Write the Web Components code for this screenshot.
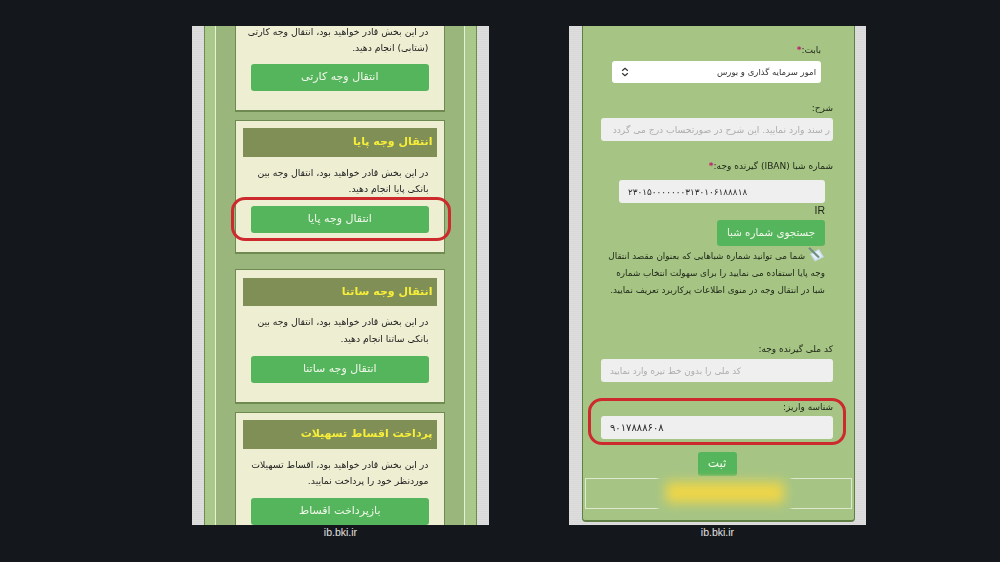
<!DOCTYPE html>
<html lang="fa">
<head>
<meta charset="utf-8">
<title>ib.bki.ir</title>
<style>
  html, body { margin: 0; height: 100%; }
  body { background: #14171b; overflow: hidden; font-family: "DejaVu Sans", "Liberation Sans", sans-serif; }
  main { display: flex; gap: 80px; padding: 26px 0 0 192px; }
</style>
</head>
<body>
<main>
  <bki-device>
    <bki-rails>
      <bki-card cut action="انتقال وجه کارتی">
        در این بخش قادر خواهید بود، انتقال وجه کارتی<br>(شتابی) انجام دهید.
      </bki-card>
      <bki-card heading="انتقال وجه پایا" action="انتقال وجه پایا" ringed>
        در این بخش قادر خواهید بود، انتقال وجه بین<br>بانکی پایا انجام دهید.
      </bki-card>
      <bki-card heading="انتقال وجه ساتنا" action="انتقال وجه ساتنا" style="margin-top:7px">
        در این بخش قادر خواهید بود، انتقال وجه بین<br>بانکی ساتنا انجام دهید.
      </bki-card>
      <bki-card heading="پرداخت اقساط تسهیلات" action="بازپرداخت اقساط">
        در این بخش قادر خواهید بود، اقساط تسهیلات<br>موردنظر خود را پرداخت نمایید.
      </bki-card>
    </bki-rails>
  </bki-device>

  <bki-device>
    <bki-form-panel>
      <bki-field label="بابت:" required kind="select" value="امور سرمایه گذاری و بورس" style="--w:209px;--mr:12px;--gap:4px;--lmr:12px"></bki-field>
      <bki-field label="شرح:" placeholder="ر سند وارد نمایید. این شرح در صورتحساب درج می گردد" style="margin-top:18px;--pr:3px;--fs:9.2px"></bki-field>
      <bki-field label="شماره شبا (IBAN) گیرنده وجه:" required value="۲۳۰۱۵۰۰۰۰۰۰۰۳۱۳۰۱۰۶۱۸۸۸۱۸" align="left" style="margin-top:18px;--w:206px;--mr:8px;--gap:7px;--fs:8.9px"></bki-field>
      <bki-iban-help></bki-iban-help>
      <bki-field label="کد ملی گیرنده وجه:" placeholder="کد ملی را بدون خط تیره وارد نمایید" align="left" style="margin-top:43px;--fs:8.8px"></bki-field>
      <bki-field label="شناسه واریز:" value="۹۰۱۷۸۸۸۶۰۸" align="left" ringed style="margin-top:18px;--gap:2px;--fs:10px"></bki-field>
      <bki-submit></bki-submit>
    </bki-form-panel>
  </bki-device>
</main>

<script>
  (function () {
    "use strict";

    var BTN = "#55b55c";

    function make(name, css, html) {
      customElements.define(name, class extends HTMLElement {
        constructor() {
          super();
          this.attachShadow({ mode: "open" });
        }
        connectedCallback() {
          var a = this;
          this.shadowRoot.innerHTML = "<style>" + css + "</style>" + (typeof html === "function" ? html(function (k) { return a.getAttribute(k) || ""; }, a) : html);
        }
      });
    }

    // one phone capture with the address under it
    make("bki-device",
      ":host{display:block;width:297px}" +
      ".screen{height:499px;overflow:hidden;background:repeating-linear-gradient(0deg,#dedede 0 1px,#d8d8d8 1px 2px);filter:blur(.2px)}" +
      ".url{height:14px;text-align:center;color:#e2e2e2;font:10.5px/14px 'Liberation Sans',Arial,sans-serif}",
      '<div class="screen"><slot></slot></div><div class="url">ib.bki.ir</div>');

    // striped green columns of the left capture
    make("bki-rails",
      ":host{display:block;height:100%;padding:0 12px;box-sizing:border-box}" +
      ".outer{height:100%;padding:0 11px 0 9.5px;background:#a9c88a;border:solid #6f8a50;border-width:0 1px}" +
      ".inner{height:100%;padding:0 19px;background:#9bb67c;border:solid #e6efd8;border-width:0 1px;display:flex;flex-direction:column;gap:8px}",
      '<div class="outer"><div class="inner"><slot></slot></div></div>');

    make("bki-card",
      ":host{display:block;flex:none;background:#eeeed3;border:1px solid #6f8a50;border-bottom-width:2px;padding:7.5px 7.5px 19px;color:#1c1c1c}" +
      ":host([cut]){border-top:0;padding-top:0;margin-top:-2.5px}" +
      "h3{margin:0;height:28.5px;background:#7f8f56;color:#f6ee3a;font:bold 11px/28.5px 'DejaVu Sans',sans-serif;padding:0 4px;text-align:right;direction:rtl;white-space:nowrap}" +
      ".desc{margin:8px 8px 8.5px;direction:rtl;text-align:right;font-size:9.3px;line-height:16.5px;white-space:nowrap}" +
      ":host([cut]) .desc{margin-top:0;margin-bottom:7px}" +
      ".act{position:relative;margin:0 8px;height:27px;border-radius:3px;background:" + BTN + ";color:#f1f7ea;font-size:11px;line-height:26px;text-align:center;direction:rtl}" +
      ".ring{position:absolute;inset:-9px -22px -8px -20px;border:3.5px solid #cd2a2e;border-radius:14px}",
      function (a, el) {
        return (a("heading") ? "<h3>" + a("heading") + "</h3>" : "") +
          '<div class="desc"><slot></slot></div><div class="act">' + a("action") +
          (el.hasAttribute("ringed") ? '<div class="ring"></div>' : "") + "</div>";
      });

    // flat green form of the right capture
    make("bki-form-panel",
      ":host{display:block;height:100%;padding:0 11px 3px 13px;box-sizing:border-box}" +
      ".panel{height:100%;box-sizing:border-box;background:#a6c585;border:solid #5f7f45;border-width:0 1px 2px;border-radius:0 0 4px 4px;padding:17px 21px 0 18px;display:flex;flex-direction:column}",
      '<div class="panel"><slot></slot></div>');

    make("bki-field",
      ":host{display:block;position:relative;flex:none}" +
      ".lab{margin-right:var(--lmr,0);height:14px;font-size:9px;line-height:14px;color:#1c2416;direction:rtl;text-align:right;white-space:nowrap}" +
      ".lab i{font-style:normal;color:#c2186b;font-weight:bold}" +
      ".box{margin:var(--gap,3px) var(--mr,0) 0 auto;width:var(--w,100%);height:23px;box-sizing:border-box;border-radius:3px;background:#efefef;font-size:var(--fs,9.5px);line-height:22px;color:#2c2c2c;padding:0 var(--pr,9px) 0 9px;overflow:hidden;white-space:nowrap;direction:rtl;text-align:right;display:flex;align-items:center}" +
      ".box.ph{color:#adadad}" +
      ".box.left{justify-content:flex-end}" +
      ".box.sel{background:#fff;height:22px;color:#333;justify-content:space-between;font-size:8.5px;padding:0 5px 0 9px}" +
      ".box svg{display:block}" +
      ".ring{position:absolute;inset:-2px -13px -6px -13px;border:3.5px solid #cd2a2e;border-radius:14px}",
      function (a, el) {
        var label = a("label") + (el.hasAttribute("required") ? "<i>*</i>" : "");
        var left = a("align") === "left" ? " left" : "";
        var box;
        if (a("kind") === "select") {
          box = '<div class="box sel"><span>' + a("value") + '</span><svg width="8" height="10" viewBox="0 0 8 10" fill="none" stroke="#333" stroke-width="1.2"><path d="M1.2 3.8 4 1.2 6.8 3.8M1.2 6.2 4 8.8 6.8 6.2"/></svg></div>';
        } else if (a("placeholder")) {
          box = '<div class="box ph' + left + '">' + a("placeholder") + "</div>";
        } else {
          box = '<div class="box' + left + '">' + a("value") + "</div>";
        }
        return '<div class="lab">' + label + "</div>" + box + (el.hasAttribute("ringed") ? '<div class="ring"></div>' : "");
      });

    // IR suffix, lookup button and the note below it
    make("bki-iban-help",
      ":host{display:block;flex:none;color:#1c2416;margin-right:8px}" +
      ".ir{height:15px;font:10.5px/15px 'Liberation Sans',Arial,sans-serif;text-align:right}" +
      ".find{margin:2px 0 0 auto;width:108px;height:26px;border-radius:3px;background:" + BTN + ";color:#f1f7ea;font-size:10.3px;line-height:25px;text-align:center;direction:rtl}" +
      ".note{margin-top:1px;margin-left:-13px;direction:rtl;text-align:right;font-size:8.8px;line-height:17px;white-space:nowrap}" +
      ".note svg{vertical-align:-3px;margin-left:3px}",
      '<div class="ir">IR</div><div class="find">جستجوی شماره شبا</div><div class="note">' +
      '<svg width="17" height="15" viewBox="0 0 17 15"><path d="M2 7 11 2 16 10 7 14.5Z" fill="#c9dcec"/><path d="M3.5 7.5 10.5 3.5 14 9.5 7.5 12.5Z" fill="#e6eff5"/><path d="M1 .8 11 10.5" stroke="#6f8f84" stroke-width="2.2" fill="none"/></svg>' +
      "شما می توانید شماره شباهایی که بعنوان مقصد انتقال<br>وجه پایا استفاده می نمایید را برای سهولت انتخاب شماره<br>شبا در انتقال وجه در منوی اطلاعات پرکاربرد تعریف نمایید.</div>");

    // submit button, then the footer box with its blurred-out text
    make("bki-submit",
      ":host{display:block;flex:none;position:relative;margin:12.5px -19px 0 -16px}" +
      ".btn{width:39px;height:24px;margin:0 auto;border-radius:3px;background:" + BTN + ";color:#f1f7ea;font-size:12px;line-height:22px;text-align:center;direction:rtl;position:relative;left:-1.5px}" +
      ".foot{margin-top:2px;height:31px;box-sizing:border-box;border:1px solid #dfe9cf;position:relative}" +
      ".mask{position:absolute;left:72px;top:-3px;width:133px;height:36px;background:#a6c585;filter:blur(1.5px)}" +
      ".blob{position:absolute;left:80px;top:3px;width:118px;height:21px;background:#eed548;filter:blur(6px)}",
      '<div class="btn">ثبت</div><div class="foot"><div class="mask"></div><div class="blob"></div></div>');
  })();
</script>
</body>
</html>
